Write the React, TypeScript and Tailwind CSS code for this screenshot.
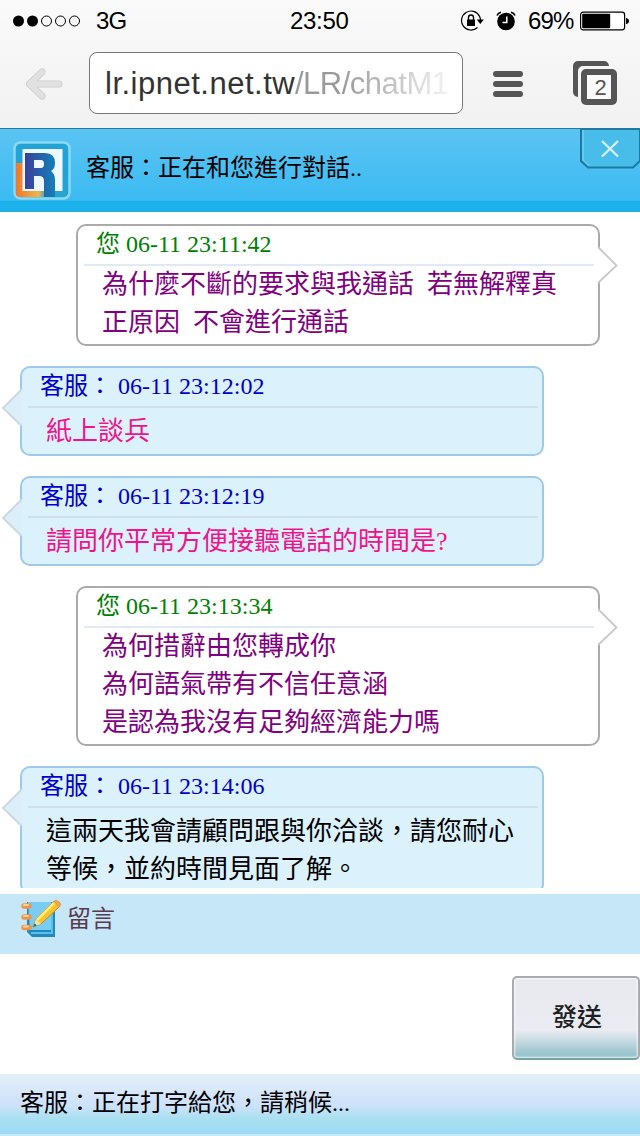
interface Message {
  mine: boolean;
  time: string;
  lines: string[];
  color: string;
}

const messages: Message[] = [
  {
    mine: true,
    time: '06-11 23:11:42',
    lines: ['為什麼不斷的要求與我通話  若無解釋真', '正原因  不會進行通話'],
    color: 'text-[#800080]'
  },
  {
    mine: false,
    time: '06-11 23:12:02',
    lines: ['紙上談兵'],
    color: 'text-[#f0148c]'
  },
  {
    mine: false,
    time: '06-11 23:12:19',
    lines: ['請問你平常方便接聽電話的時間是?'],
    color: 'text-[#f0148c]'
  },
  {
    mine: true,
    time: '06-11 23:13:34',
    lines: ['為何措辭由您轉成你', '為何語氣帶有不信任意涵', '是認為我沒有足夠經濟能力嗎'],
    color: 'text-[#800080]'
  },
  {
    mine: false,
    time: '06-11 23:14:06',
    lines: ['這兩天我會請顧問跟與你洽談，請您耐心', '等候，並約時間見面了解。'],
    color: 'text-black'
  }
];

function StatusBar() {
  return (
    <div className="flex h-[41px] items-center pl-[13px] pr-[10px] text-[24px] leading-none text-black">
      <svg width="68" height="12" viewBox="0 0 68 12">
        <circle cx="5.5" cy="6" r="5.5" />
        <circle cx="19.5" cy="6" r="5.5" />
        <circle cx="33.5" cy="6" r="5" fill="none" stroke="#000" />
        <circle cx="47.5" cy="6" r="5" fill="none" stroke="#000" />
        <circle cx="61.5" cy="6" r="5" fill="none" stroke="#000" />
      </svg>
      <span className="ml-[15px] w-[194px] pt-px tracking-[-0.8px]">3G</span>
      <span className="w-[170px] pt-px tracking-[-0.3px]">23:50</span>
      <svg width="24" height="22" viewBox="0 0 24 22">
        <path d="M19.6 6.4A9.5 9.5 0 1 0 17.5 17.5M19.6 6.4A9.5 9.5 0 0 1 20.5 10" fill="none" stroke="#000" strokeWidth="1.2" />
        <path d="M16.8 9.5h7l-3.5 4.5z" />
        <rect x="7" y="9.5" width="8" height="6.5" rx="0.5" />
        <path d="M8.5 10V7.5a2.5 2.5 0 0 1 5 0V10" fill="none" stroke="#000" strokeWidth="1.4" />
      </svg>
      <svg className="ml-[12px]" width="20" height="20" viewBox="0 0 20 20">
        <circle cx="10" cy="10.5" r="8.8" />
        <path d="M1 4.5Q2 2 5 1.3M15 1.3Q18 2 19 4.5" fill="none" stroke="#000" strokeWidth="1.6" />
        <path d="M10.8 5.5v6H6.5" fill="none" stroke="#fff" strokeWidth="1.5" />
      </svg>
      <span className="ml-[12px] w-[52px] whitespace-nowrap pt-px tracking-[-0.9px]">69%</span>
      <svg width="50" height="20" viewBox="0 0 50 20">
        <rect x="0.6" y="1.2" width="44" height="17.6" rx="2.5" fill="#fff" stroke="#000" strokeWidth="1.2" />
        <rect x="2.2" y="2.8" width="28" height="14.4" rx="1" />
        <path d="M46 7q3 .5 3 3t-3 3z" />
      </svg>
    </div>
  );
}

function Toolbar() {
  return (
    <div className="flex h-[87px] items-start pl-[25px] pt-[11px]">
      <svg className="mt-[15px]" width="39" height="34" viewBox="0 0 39 34">
        <path d="M17 5L4.5 17L17 29M5 17H34" fill="none" stroke="#cbcbcb" strokeWidth="7" strokeLinecap="round" strokeLinejoin="round" />
        <path d="M17 5L4.5 17L17 29M5 17H34" fill="none" stroke="#e1e1e1" strokeWidth="5.4" strokeLinecap="round" strokeLinejoin="round" />
      </svg>
      <div className="ml-[25px] h-[62px] w-[374px] overflow-hidden whitespace-nowrap rounded-[8px] border border-[#777] bg-white pl-[15px] text-[31px] leading-[61px] text-[#333]">
        <span className="inline-block w-[190px] tracking-[0.5px]">lr.ipnet.net.tw</span>
        <span className="inline-block bg-linear-to-r from-[#999] from-30% to-[#f4f4f4] bg-clip-text tracking-[-0.5px] text-transparent">
          /LR/chatM1
        </span>
      </div>
      <svg className="ml-[30px] mt-[18px]" width="30" height="28" viewBox="0 0 30 28">
        <path d="M3 4H27M3 14H27M3 24H27" stroke="#555" strokeWidth="6" strokeLinecap="round" />
      </svg>
      <svg className="ml-[50px] mt-[9px]" width="45" height="45" viewBox="0 0 45 45">
        <path d="M5 36a5 5 0 0 1-5-5V5a5 5 0 0 1 5-5h26a5 5 0 0 1 5 5H10a5 5 0 0 0-5 5z" fill="#555" />
        <rect x="8" y="8" width="36" height="36" rx="5" fill="#555" />
        <rect x="14" y="14" width="24" height="24" fill="#fafafa" />
        <text x="21.5" y="34" fontSize="22" fill="#555">2</text>
      </svg>
    </div>
  );
}

function Logo() {
  return (
    <svg width="60" height="60" viewBox="0 0 60 60">
      <defs>
        <linearGradient id="logo-r" x1="0" x2="1">
          <stop offset="0" stopColor="#3a409c" />
          <stop offset="1" stopColor="#147fb8" />
        </linearGradient>
        <linearGradient id="logo-bottom" x1="0" x2="1">
          <stop offset="0" stopColor="#f0762e" />
          <stop offset="0.45" stopColor="#f0b54a" />
          <stop offset="0.6" stopColor="#2aa5cf" />
        </linearGradient>
      </defs>
      <rect x="2.5" y="1.5" width="55" height="56" rx="6" fill="#22a3d6" stroke="#8bd9f4" strokeWidth="2.5" />
      <path d="M4 22H12V49H54V52Q54 56 50 56H8Q4 56 4 52Z" fill="url(#logo-bottom)" />
      <rect x="10.500" y="8" width="40" height="42" fill="#eef9ff" />
      <path
        fillRule="evenodd"
        d="M13 12H33Q43 12 43 22Q43 28 39 30Q43 33 43 39V56H32V40Q32 35 27 35H22V48H13ZM22 19V27H29Q32 27 32 23T29 19Z"
        fill="url(#logo-r)"
      />
    </svg>
  );
}

function ChatHeader() {
  return (
    <div className="flex h-[84px] items-start border-b-[11px] border-t border-b-[#1bb1ea] border-t-[#23799f] bg-linear-to-b from-[#5ac4f2] to-[#35b9f2] bg-origin-border pl-[12px]">
      <div className="mt-[12px]">
        <Logo />
      </div>
      <h1 className="ml-[14px] mt-[20px] text-[24px] leading-[38px] text-black">客服：正在和您進行對話..</h1>
      <svg className="ml-auto" width="60" height="40" viewBox="0 0 60 40">
        <path d="M1 0V32L8 38.5H53L60 32V0Z" fill="#48bdea" stroke="#1d7a9f" strokeWidth="2" />
        <path d="M3 1V31L9 36.5" fill="none" stroke="#82d6f5" />
        <path d="M22 12L38 27.500M38 12L22 27.500" stroke="#d4f0fa" strokeWidth="2.4" />
      </svg>
    </div>
  );
}

function Tail({ mine }: { mine: boolean }) {
  return mine ? (
    <svg className="absolute -right-[20px] top-[19px]" width="22" height="40" viewBox="0 0 22 40">
      <path d="M0 1L20 20L0 39Z" fill="#fff" />
      <path d="M2 2L20.500 20.500L2 38" fill="none" stroke="#c8c8c8" strokeWidth="1.8" />
    </svg>
  ) : (
    <svg className="absolute -left-[20px] top-[19px]" width="20" height="42" viewBox="0 0 20 42">
      <path d="M20 2L1 21L20 39Z" fill="#dceff8" />
      <path d="M19 3L1 21L19 38.5" fill="none" stroke="#c8d8df" strokeWidth="1.8" />
    </svg>
  );
}

function Bubble({ message }: { message: Message }) {
  const { mine, time, lines, color } = message;
  return (
    <div
      className={`relative w-[524px] shrink-0 rounded-[10px] border-2 ${
        mine ? 'ml-[76px] border-[#aaa] bg-white' : 'ml-5 border-[#a0c8ea] bg-[#dbf1fc]'
      }`}
    >
      <div
        className={`ml-[6px] mr-1 border-b-2 pl-3 text-[24px] leading-[36px] ${
          mine ? 'h-10 border-[#dfe9f7] text-[#008000]' : 'h-10 border-[#cfe0ea] text-[#0000cd]'
        }`}
      >
        {mine ? '您 ' : '客服： '}
        {time}
      </div>
      <div className={`whitespace-pre pl-6 text-[26px] leading-[38px] ${color} ${mine ? 'pb-[2px]' : 'pb-[3px] pt-[5px]'}`}>
        {lines.map((line) => (
          <p key={line} className="h-[38px]">{line}</p>
        ))}
      </div>
      <Tail mine={mine} />
    </div>
  );
}

function NotebookIcon() {
  return (
    <svg width="40" height="40" viewBox="0 0 40 40">
      <path d="M6 3H34V38H11L6 33Z" fill="#2389bd" />
      <path d="M7 3H30V31H9Z" fill="#78cdf5" />
      <path d="M10 34H31V6" fill="none" stroke="#5bc0e8" strokeWidth="2" />
      <path d="M3 7H8M3 18H8M3 28.500H8" stroke="#ed9447" strokeWidth="5.500" strokeLinecap="round" />
      <path d="M3 6H7M3 17H7M3 27.500H7" stroke="#ffd09a" strokeWidth="2" strokeLinecap="round" />
      <path d="M12 28L15 20L32 3Q35 0 38 3T37 9L20 25Z" fill="#f5c52d" stroke="#c88b23" />
      <path d="M16 21L33 4" stroke="#ffec78" strokeWidth="2.5" />
      <path d="M12 28L15 20L20 25Z" fill="#e8e3b0" />
      <path d="M12 28L13.5 24.5L16 26.5Z" fill="#1f6d73" />
      <path d="M33 3Q36 0 38 3T37 8Z" fill="#f0a05a" />
    </svg>
  );
}

export default function App() {
  return (
    <div
      lang="zh-TW"
      className="flex h-[1136px] w-[640px] flex-col overflow-hidden bg-white font-['Liberation_Serif','Noto_Sans_CJK_TC',serif] font-normal"
    >
      <div className="h-32 shrink-0 bg-linear-to-b from-[#fafafa] to-[#f1f1f1] font-['Liberation_Sans',sans-serif]">
        <StatusBar />
        <Toolbar />
      </div>
      <ChatHeader />
      <main className="flex h-[676px] shrink-0 flex-col gap-5 overflow-hidden pt-3">
        {messages.map((message) => (
          <Bubble key={message.time} message={message} />
        ))}
      </main>
      <div className="mt-[6px] flex h-[60px] shrink-0 items-start bg-[#c6e7f7] pl-[21px] pt-[5px]">
        <NotebookIcon />
        <span className="ml-[6px] text-[24px] leading-[41px] text-[#5b3a50]">留言</span>
      </div>
      <div className="flex h-[120px] shrink-0 justify-end pt-[22px]">
        <button className="h-[84px] w-[128px] rounded-[5px] border-2 border-[#a9a9b0] border-b-[#79a3ab] bg-linear-to-b from-[#e8e9ee] from-5% via-[#ebebf3] via-65% to-[#98c4cd] to-95% pl-[2px] text-[25px] font-medium text-[#1c1f24] shadow-[inset_0_0_2px_1px_rgba(255,255,255,0.75)]">
          發送
        </button>
      </div>
      <div className="h-[62px] shrink-0 border-b-2 border-[#c5e9fb] bg-[linear-gradient(#e4f0f7,#cfe2fc_48%,#cfe2fc_52%,#a8e0ef_75%,#9fdaf5)] pl-5 text-[24px] leading-[59px] text-black">
        客服：正在打字給您，請稍候...
      </div>
    </div>
  );
}
